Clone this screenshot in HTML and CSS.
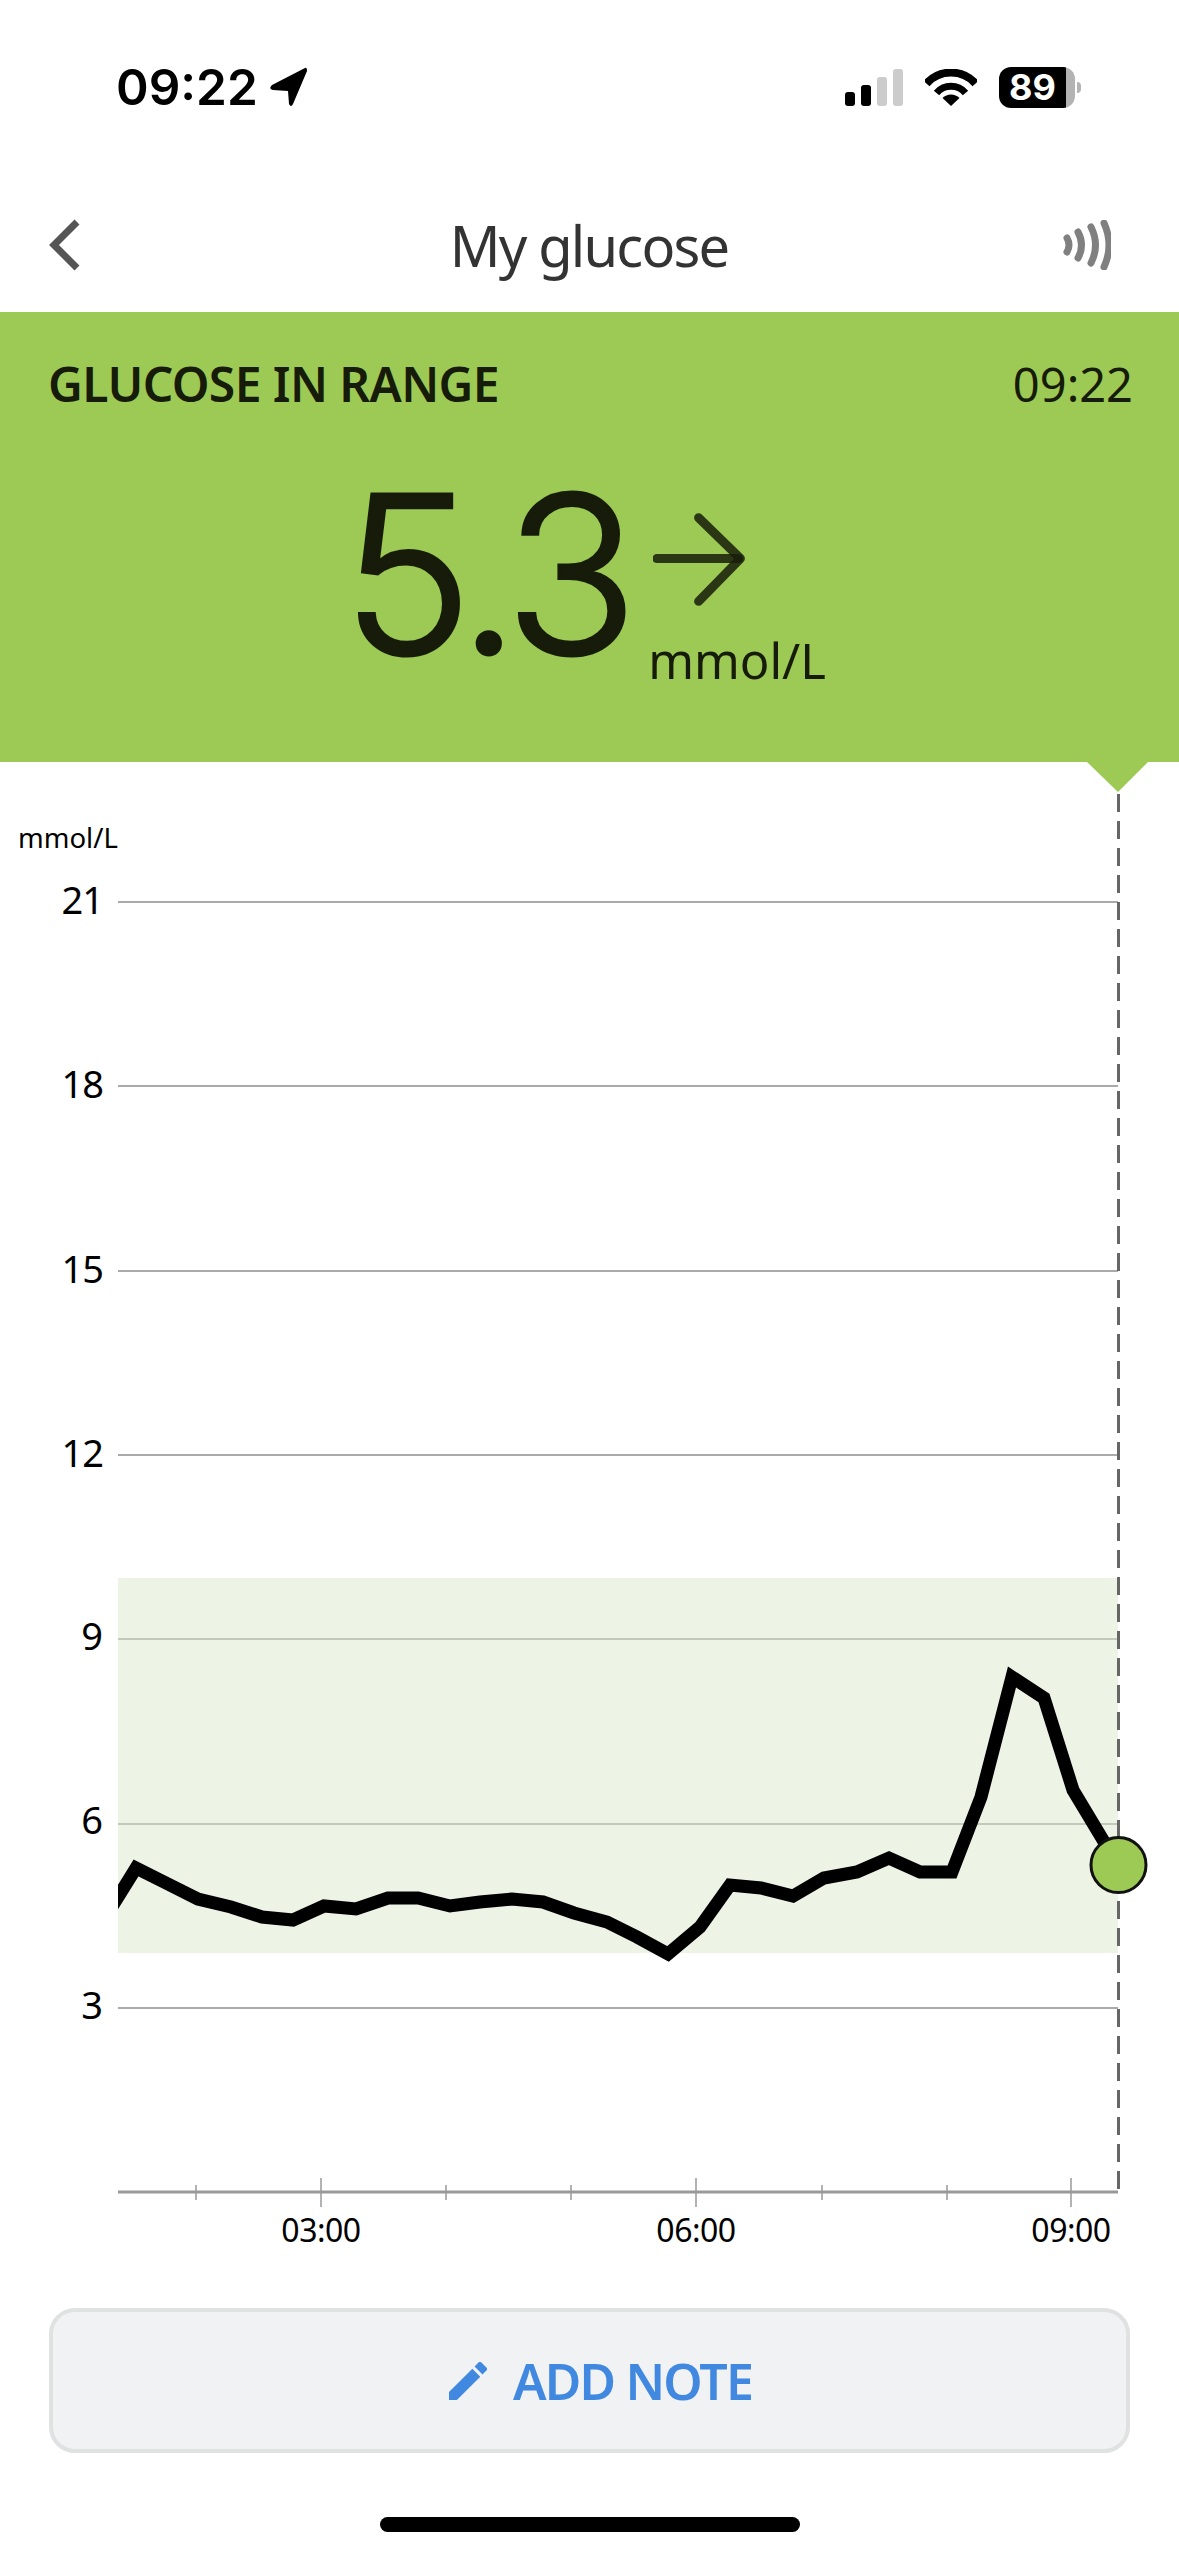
FILE: index.html
```html
<!DOCTYPE html>
<html lang="en">

<head>
    <meta charset="UTF-8">
    <meta name="viewport" content="width=device-width, initial-scale=1.0">
    <title>My glucose</title>
    <link rel="stylesheet" href="styles.css">
</head>

<body>
    <div class="statusbar">
        <div class="clock">
            <span>09:22</span>
            <svg class="location" width="40" height="40" viewBox="0 0 40 40">
                <path d="M36 1 L3 18 Q-1 22 4 23 L19 24 L20 37 Q22 41 24 37 L38 4 Q38 0 36 1 Z" fill="#000" />
            </svg>
        </div>
        <div class="status-icons">
            <svg width="58" height="37" viewBox="0 0 58 37">
                <rect x="0" y="23" width="10" height="14" rx="3" fill="#000" />
                <rect x="16" y="16" width="10" height="21" rx="3" fill="#000" />
                <rect x="32" y="8" width="10" height="29" rx="3" fill="#ccc" />
                <rect x="48" y="0" width="10" height="37" rx="3" fill="#ccc" />
            </svg>
            <svg width="52" height="38" viewBox="0 0 52 38">
                <path d="M1.5 14.5 A33 33 0 0 1 50.5 14.5" fill="none" stroke="#000" stroke-width="8" />
                <path d="M11.5 24 A19 19 0 0 1 40.5 24" fill="none" stroke="#000" stroke-width="7" />
                <path d="M26 37 L17.5 29 A12 12 0 0 1 34.5 29 Z" fill="#000" />
            </svg>
            <div class="battery">
                <div class="battery-body">89</div>
                <div class="battery-nub"></div>
            </div>
        </div>
    </div>

    <div class="navbar">
        <svg width="32" height="52" viewBox="0 0 32 52">
            <path d="M28 3 L5 26 L28 49" fill="none" stroke="#555" stroke-width="7" />
        </svg>
        <h1>My glucose</h1>
        <svg width="48" height="50" viewBox="0 0 48 50">
            <g fill="none" stroke="#808080" stroke-width="7" stroke-linecap="round">
                <path d="M4 18 Q8 25 4 32" />
                <path d="M15 12 Q22 25 15 38" />
                <path d="M28 7 Q37 25 28 43" />
                <path d="M41 3 Q51 25 41 47" />
            </g>
        </svg>
    </div>

    <div class="banner">
        <div class="banner-top">
            <span class="banner-status">GLUCOSE IN RANGE</span>
            <span class="banner-time">09:22</span>
        </div>
        <div class="reading">
            <span class="reading-value">5.3</span>
            <div class="reading-side">
                <svg width="95" height="95" viewBox="0 0 100 100">
                    <g fill="none" stroke="#161c09" stroke-opacity="0.85" stroke-width="9.5" stroke-linecap="round" stroke-linejoin="round">
                        <path d="M4 48 H90" />
                        <path d="M48 5 L92 48 L48 93" />
                    </g>
                </svg>
                <span class="reading-unit">mmol/L</span>
            </div>
        </div>
    </div>

    <svg class="chart" width="1179" height="1528" viewBox="0 762 1179 1528">
        <defs>
            <clipPath id="plot-area">
                <rect x="118" y="880" width="1061" height="1320" />
            </clipPath>
        </defs>

        <rect x="118" y="1578" width="1000" height="375" fill="#edf3e5" />

        <g stroke="#aaa" stroke-width="2">
            <path d="M118 902 H1118" />
            <path d="M118 1086 H1118" />
            <path d="M118 1271 H1118" />
            <path d="M118 1455 H1118" />
            <path d="M118 1639 H1118" stroke="#c3c9bb" />
            <path d="M118 1824 H1118" stroke="#c3c9bb" />
            <path d="M118 2008 H1118" />
            <path d="M118 2192 H1118" stroke="#999" stroke-width="3" />
        </g>

        <g stroke="#999" stroke-width="1.5">
            <path d="M196 2185 V2200" />
            <path d="M321 2178 V2207" />
            <path d="M446 2185 V2200" />
            <path d="M571 2185 V2200" />
            <path d="M696 2178 V2207" />
            <path d="M822 2185 V2200" />
            <path d="M947 2185 V2200" />
            <path d="M1071 2178 V2207" />
        </g>

        <path class="chart-pointer" d="M1087 762 H1148 L1118 792 Z" />
        <path d="M1118.5 794 V2192" stroke="#666" stroke-width="3" stroke-dasharray="18 9" />

        <polyline class="chart-line" clip-path="url(#plot-area)" points="105,1918 136,1868 166,1883 198,1899 231,1907 262,1917 293,1920 324,1906 356,1909 388,1898 418,1898 450,1906 480,1902 512,1899 543,1902 574,1913 607,1922 637,1937 668,1954 700,1927 730,1885 761,1888 793,1896 824,1878 857,1872 889,1858 920,1872 952,1872 981,1797 1012,1677 1044,1698 1073,1790 1118,1865" />
        <circle class="chart-dot" cx="1118.5" cy="1865" r="27.5" />

        <text class="axis-unit" x="18" y="848">mmol/L</text>
        <g class="axis-y">
            <text x="103" y="914">21</text>
            <text x="103" y="1098">18</text>
            <text x="103" y="1283">15</text>
            <text x="103" y="1467">12</text>
            <text x="102" y="1650">9</text>
            <text x="102" y="1834">6</text>
            <text x="102" y="2019">3</text>
        </g>
        <g class="axis-x">
            <text x="321" y="2242">03:00</text>
            <text x="696" y="2242">06:00</text>
            <text x="1071" y="2242">09:00</text>
        </g>
    </svg>

    <div class="actions">
        <button type="button" class="note-button">
            <svg width="38" height="38" viewBox="3 3 18 18">
                <path d="M3 17.25V21h3.75L17.81 9.94l-3.75-3.75L3 17.25zM20.71 7.04a1 1 0 0 0 0-1.41l-2.34-2.34a1 1 0 0 0-1.41 0l-1.83 1.83 3.75 3.75 1.83-1.83z" fill="#4189e0" />
            </svg>
            ADD NOTE
        </button>
    </div>

    <div class="home-bar"></div>
</body>

</html>
```

FILE: styles.css
```css
body {
    font-family: "Noto Sans", Arial, sans-serif;
    background-color: #fff;
    margin: 0;
    width: 1179px;
    height: 2556px;
    overflow: hidden;
}

/* Status bar */
.statusbar {
    height: 146px;
    box-sizing: border-box;
    padding: 67px 98px 0 116px;
    display: flex;
    justify-content: space-between;
    align-items: flex-start;
}

.clock {
    display: flex;
    align-items: center;
    gap: 11px;
    font-family: Inter, sans-serif;
    font-weight: 600;
    font-size: 49.5px;
    line-height: 40px;
    color: #000;
}

.status-icons {
    display: flex;
    align-items: center;
    gap: 22px;
}

.battery {
    display: flex;
    align-items: center;
    gap: 2px;
}

.battery-body {
    width: 76px;
    height: 41px;
    box-sizing: border-box;
    padding-right: 9px;
    border-radius: 12px;
    background: linear-gradient(to right, #000 67px, #b3b3b3 67px);
    color: #fff;
    font-family: Inter, sans-serif;
    font-weight: 700;
    font-size: 36px;
    line-height: 41px;
    text-align: center;
}

.battery-nub {
    width: 4px;
    height: 11px;
    border-radius: 0 4px 4px 0;
    background-color: #b3b3b3;
}

/* Navbar */
.navbar {
    height: 166px;
    box-sizing: border-box;
    padding: 32px 68px 0 49px;
    display: flex;
    align-items: center;
}

.navbar h1 {
    flex: 1;
    margin: 0;
    padding-left: 34px;
    text-align: center;
    font-size: 56px;
    font-weight: 400;
    letter-spacing: -1.8px;
    color: #333;
}

/* Green banner */
.banner {
    height: 450px;
    box-sizing: border-box;
    padding: 39px 46px 0 48px;
    background-color: #9dca55;
    color: #161c09;
}

.banner-top {
    display: flex;
    justify-content: space-between;
    align-items: center;
}

.banner-status {
    font-size: 48px;
    font-weight: 600;
    letter-spacing: -0.6px;
}

.banner-time {
    font-size: 47px;
}

.reading {
    display: flex;
    justify-content: center;
    padding-right: 13px;
}

.reading-value {
    font-family: Inter, sans-serif;
    font-weight: 300;
    font-size: 220px;
    line-height: 250px;
    letter-spacing: -9px;
    padding-top: 33px;
    -webkit-text-stroke: 3px #161c09;
}

.reading-side {
    display: flex;
    flex-direction: column;
    padding: 97px 0 0 24px;
}

.reading-unit {
    font-size: 49px;
    line-height: 60px;
    margin-top: 22px;
    margin-left: -5px;
}

/* Chart */
.chart {
    display: block;
}

.chart-pointer {
    fill: #9dca55;
}

.chart-line {
    fill: none;
    stroke: #000;
    stroke-width: 13;
    stroke-linejoin: miter;
}

.chart-dot {
    fill: #9dca55;
    stroke: #111;
    stroke-width: 3;
}

.axis-unit {
    font-size: 27.5px;
}

.axis-y text {
    font-size: 38px;
    text-anchor: end;
    letter-spacing: -1px;
}

.axis-x text {
    font-size: 32px;
    letter-spacing: -0.5px;
    text-anchor: middle;
}

/* Button */
.actions {
    padding: 18px 49px 0;
}

.note-button {
    width: 100%;
    height: 145px;
    padding: 0 0 0 22px;
    border: 4px solid #e0e1e1;
    border-radius: 26px;
    background-color: #f1f2f4;
    color: #4189e0;
    font-family: "Noto Sans", Arial, sans-serif;
    font-size: 50px;
    font-weight: 600;
    letter-spacing: -1.8px;
    display: flex;
    justify-content: center;
    align-items: center;
    gap: 26px;
}

.home-bar {
    width: 420px;
    height: 15px;
    margin: 64px auto 0;
    border-radius: 8px;
    background-color: #000;
}
```
